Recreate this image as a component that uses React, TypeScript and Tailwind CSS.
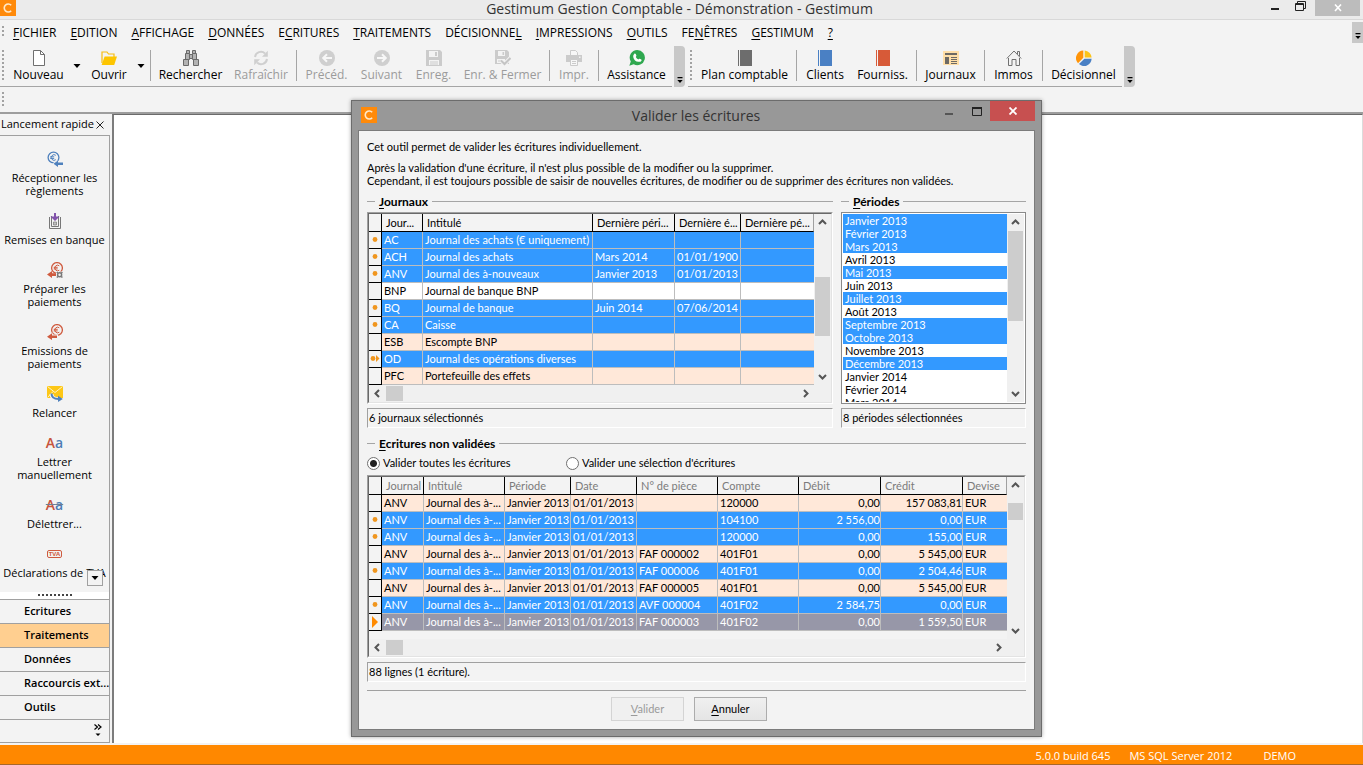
import type { ReactNode } from "react";

const SHELL = "font-['Open_Sans','Noto_Sans',sans-serif]";
const DIALOG = "font-[Lato,'Liberation_Sans',sans-serif]";

/* ---------- small helpers ---------- */

function Mnemonic({ text, at = 0 }: { text: string; at?: number }) {
  return (
    <>
      {text.slice(0, at)}
      <span className="underline underline-offset-2">{text[at]}</span>
      {text.slice(at + 1)}
    </>
  );
}

function Grip({ className }: { className: string }) {
  return (
    <span
      aria-hidden="true"
      className={`w-[2px] shrink-0 bg-[repeating-linear-gradient(to_bottom,#a2a2a2_0,#a2a2a2_2px,transparent_2px,transparent_4px)] ${className}`}
    />
  );
}

function Overflow({ className, label }: { className: string; label: string }) {
  return (
    <button type="button" aria-label={label} className={`flex shrink-0 items-end justify-center bg-[#c8c8c8] pb-[3px] ${className}`}>
      <svg width="6" height="7" viewBox="0 0 6 7" aria-hidden="true">
        <path d="M0.5 0h5v1.2h-5zM0.3 3h5.4L3 6z" fill="#000" />
      </svg>
    </button>
  );
}

function Logo({ className }: { className: string }) {
  return (
    <svg viewBox="0 0 16 16" className={className} aria-hidden="true">
      <rect width="16" height="16" fill="#ff8a0a" />
      <path d="M11.2 5.3A4 4 0 1 0 11.2 10.7" fill="none" stroke="#ffe9c8" strokeWidth="1.6" />
    </svg>
  );
}

function Icon({ children }: { children: ReactNode }) {
  return (
    <svg width="16" height="16" viewBox="0 0 16 16" aria-hidden="true" className="shrink-0">
      {children}
    </svg>
  );
}

/* ---------- toolbar icons ---------- */

const NewIcon = (
  <Icon>
    <path d="M2.5 0.5h7l4 4v11h-11z" fill="#fff" stroke="#6f6f6f" />
    <path d="M9.5 0.5v4h4" fill="none" stroke="#6f6f6f" />
  </Icon>
);
const OpenIcon = (
  <Icon>
    <path d="M1 13V2h5l1.5 2H13v3" fill="none" stroke="#f7bd12" strokeWidth="1.2" />
    <path d="M3.6 6.5H16L13.2 15H0.6z" fill="#fdc500" />
  </Icon>
);
const FindIcon = (
  <Icon>
    <g fill="#b3b3b3" stroke="#6a6a6a" strokeWidth="1">
      <path d="M3.5 0.5h3v3h-3zM9.5 0.5h3v3h-3z" />
      <path d="M2.5 3.5h4v6h-4zM9.5 3.5h4v6h-4z" />
      <path d="M0.5 9.5h5v6h-5zM10.5 9.5h5v6h-5z" />
      <path d="M6.5 4.5h3v4h-3z" />
    </g>
  </Icon>
);
const RefreshIcon = (
  <Icon>
    <path d="M2 7A6 6 0 0 1 12 3.4M14 9A6 6 0 0 1 4 12.6" fill="none" stroke="#cfcfcf" strokeWidth="2" />
    <path d="M14.8 0.8v6H9zM1.2 15.2v-6H7z" fill="#cfcfcf" />
  </Icon>
);
const PrevIcon = (
  <Icon>
    <circle cx="8" cy="8" r="8" fill="#cfcfcf" />
    <path d="M13 8H4.5M8 4.2L4.2 8L8 11.8" fill="none" stroke="#f7f7f7" strokeWidth="2" />
  </Icon>
);
const NextIcon = (
  <Icon>
    <circle cx="8" cy="8" r="8" fill="#cfcfcf" />
    <path d="M3 8h8.5M8 4.2L11.8 8L8 11.8" fill="none" stroke="#f7f7f7" strokeWidth="2" />
  </Icon>
);
const SaveIcon = (
  <Icon>
    <path d="M0 0h14l2 2v14H0z" fill="#cbcbcb" />
    <path d="M3 1h9v6H3zM3 10h10v5H3z" fill="#f3f3f3" />
    <path d="M9 2h2v4H9zM4 11.5h8v1H4zM4 13.5h8v1H4z" fill="#cbcbcb" />
  </Icon>
);
const SaveCloseIcon = (
  <Icon>
    <path d="M0 0h12l2 2v12H0z" fill="#cbcbcb" />
    <path d="M3 1h7v5H3zM2 9h8v4H2z" fill="#f3f3f3" />
    <path d="M7.5 2h1.6v3H7.5zM3 10.5h5v1H3z" fill="#cbcbcb" />
    <path d="M6 10.5l3.5 3.5L15.5 8" fill="none" stroke="#f3f3f3" strokeWidth="4" />
    <path d="M6 10.5l3.5 3.5L15.5 8" fill="none" stroke="#c4c4c4" strokeWidth="2" />
  </Icon>
);
const PrintIcon = (
  <Icon>
    <path d="M4.5 5V0.5h5l2 2V5" fill="#f7f7f7" stroke="#cbcbcb" />
    <path d="M0 5h16v7H0z" fill="#cbcbcb" />
    <path d="M4.5 9.5h7v6h-7z" fill="#f7f7f7" stroke="#cbcbcb" />
    <path d="M13 6.5h1.5V8H13z" fill="#f3f3f3" />
    <path d="M6 11.5h4M6 13.5h4" stroke="#cbcbcb" />
  </Icon>
);
const HelpIcon = (
  <Icon>
    <path d="M8.3 0a7.6 7.6 0 1 1-3.6 14.3L0.3 15.8l1.5-4.3A7.6 7.6 0 0 1 8.3 0z" fill="#2fa84f" />
    <path
      d="M5.2 4c.5-.6 1.2-.5 1.5.1l.7 1.5c.1.4-.1.8-.6 1.3.6 1.2 1.4 2 2.6 2.5.5-.7.9-.9 1.3-.7l1.5.8c.5.3.5.9.1 1.4-.7.9-1.7 1.2-2.9.8C6.7 11.7 4.8 9.6 4.3 7.2 4.1 5.9 4.3 4.9 5.2 4z"
      fill="#fff"
    />
  </Icon>
);
const bookIcon = (color: string) => (
  <Icon>
    <path d="M1 0h1v16H1zM3 0h12v16H3z" fill={color} />
  </Icon>
);
const JournalIcon = (
  <Icon>
    <rect y="1" width="16" height="14" fill="#ffdfa8" />
    <path d="M2 3h12v2H2zM2 7h4v7H2z" fill="#6d6a65" />
    <path d="M8 7.5h6M8 9.5h6M8 11.5h6M8 13.5h6" stroke="#6d6a65" />
  </Icon>
);
const HouseIcon = (
  <Icon>
    <path
      d="M0.8 8.5L8 1l7.2 7.5M2.5 8v7.5h3.5v-6h4v6h3.5v-7.5M11.5 4V1.5h2v4.5"
      fill="none"
      stroke="#707070"
      strokeWidth="1"
    />
  </Icon>
);
const PieIcon = (
  <Icon>
    <path d="M7.3 0.5v7.3L2 13.2A7.6 7.6 0 0 1 7.3 0.5z" fill="#ff9408" />
    <path d="M8.7 0.5A7.5 7.5 0 0 1 15.6 7.4H8.7z" fill="#fcc419" />
    <path d="M15.6 8.8A7.6 7.6 0 0 1 3 14.1L8.4 8.8z" fill="#4a80c4" />
  </Icon>
);

/* ---------- sidebar icons ---------- */

function EuroCoin({ color, cx, cy }: { color: string; cx: number; cy: number }) {
  return (
    <>
      <circle cx={cx} cy={cy} r="5.4" fill="none" stroke={color} strokeWidth="1.3" />
      <path
        d={`M${cx + 2.3} ${cy - 2.2}a2.8 2.8 0 1 0 0 4.4M${cx - 3.3} ${cy - 0.7}h4M${cx - 3.3} ${cy + 0.9}h4`}
        fill="none"
        stroke={color}
        strokeWidth="1"
      />
    </>
  );
}
const ReceiveIcon = (
  <Icon>
    <EuroCoin color="#4f81bd" cx={6.5} cy={6.5} />
    <path d="M16 10.5v4h-5.5V16.5L5.5 12.5l5-4v2z" fill="#f3f3f3" />
    <path d="M16 11.5v2.500h-5V16L6.500 12.700 11 9.500v2z" fill="#4f81bd" />
  </Icon>
);
const BankIcon = (
  <Icon>
    <path d="M2.5 4v11.5h11V4M4.5 3v10.5h7V3" fill="none" stroke="#777" />
    <path d="M6.5 9h3v3h-3z" fill="#c0c0c0" stroke="#777" strokeWidth="0.7" />
    <path d="M7 0h2v3.500h3.500L8 8 3.500 3.500H7z" fill="#8253ab" />
  </Icon>
);
const PrepareIcon = (
  <Icon>
    <EuroCoin color="#cf5b3f" cx={10} cy={6} />
    <path d="M0 12.5L5 9v2.3h4v2.6H5V16z" fill="#cf5b3f" />
    <rect x="9" y="9.5" width="7" height="6.5" fill="#f3f3f3" />
    <circle cx="12.6" cy="12.8" r="2" fill="none" stroke="#777" strokeWidth="1.5" />
    <path d="M9.8 10l1 1M15.4 10l-1 1M9.8 15.6l1-1M15.4 15.6l-1-1" stroke="#777" strokeWidth="1.4" />
  </Icon>
);
const EmitIcon = (
  <Icon>
    <EuroCoin color="#cf5b3f" cx={10} cy={6} />
    <path d="M0 12.5L5.5 8.2v2.3H11v4H5.5V17z" fill="#f3f3f3" />
    <path d="M0 12.7L5 9.2v2.3h5v2.5H5V16z" fill="#cf5b3f" />
  </Icon>
);
const RemindIcon = (
  <Icon>
    <rect width="16" height="12" fill="#fdc716" />
    <path d="M0.5 0.5L8 6.5l7.5-6M0.5 11.5L6 5.5" fill="none" stroke="#fff3c4" strokeWidth="1" />
    <path d="M4.5 8c0 4 3 5.2 7 5.2" fill="none" stroke="#f3f3f3" strokeWidth="4" />
    <path d="M4.5 7.5c0 4.5 3 5.5 7 5.5" fill="none" stroke="#4f81bd" strokeWidth="2" />
    <path d="M11 9.8l4.8 3.2L11 16z" fill="#4f81bd" />
  </Icon>
);
const LetterIcon = (
  <span aria-hidden="true" className="h-4 text-[14px] leading-4 font-semibold">
    <span className="text-[#c7543c]">A</span>
    <span className="text-[#4c7db5]">a</span>
  </span>
);
const UnletterIcon = (
  <span aria-hidden="true" className="h-4 text-[14px] leading-4 font-semibold text-[#6f7f94] line-through">
    <span className="text-[#c7543c]">A</span>
    <span className="text-[#4c7db5]">a</span>
  </span>
);
const VatIcon = (
  <span aria-hidden="true" className="flex h-4 items-center">
    <span className="rounded-xs border border-[#cf5b3f] px-px text-[6px] leading-[6px] font-bold text-[#cf5b3f]">TVA</span>
  </span>
);

/* ---------- application chrome ---------- */

const MENUS: [string, number][] = [
  ["FICHIER", 0],
  ["EDITION", 0],
  ["AFFICHAGE", 0],
  ["DONNÉES", 0],
  ["ECRITURES", 1],
  ["TRAITEMENTS", 0],
  ["DÉCISIONNEL", 10],
  ["IMPRESSIONS", 0],
  ["OUTILS", 0],
  ["FENÊTRES", 2],
  ["GESTIMUM", 0],
  ["?", 0],
];

function Tool({ icon, label, width, disabled }: { icon: ReactNode; label: string; width: string; disabled?: boolean }) {
  return (
    <button
      type="button"
      disabled={disabled}
      className={`flex shrink-0 flex-col items-center gap-px whitespace-nowrap disabled:text-[#9b9b9b] ${width}`}
    >
      {icon}
      <span className="leading-4">{label}</span>
    </button>
  );
}

function ToolArrow({ label }: { label: string }) {
  return (
    <button type="button" aria-label={label} className="flex h-8 w-[14px] shrink-0 items-center justify-center">
      <svg width="8" height="4" viewBox="0 0 8 4" aria-hidden="true">
        <path d="M0.5 0h7L4 4z" fill="#000" />
      </svg>
    </button>
  );
}

const Sep = () => <span className="mx-[2px] h-[31px] w-px shrink-0 bg-[#a5a5a5]" />;

function TitleBar() {
  return (
    <header className="flex h-5 shrink-0 items-start border-b border-[#d8d8d8] bg-[#ebebeb]">
      <Logo className="size-4" />
      <h1 className="flex-1 pl-[72px] text-center text-[14px] leading-[18px] text-[#333]">
        Gestimum Gestion Comptable - Démonstration - Gestimum
      </h1>
      <div className="flex pr-[3px]">
        <button type="button" aria-label="Réduire" className="flex h-3 w-6 items-center justify-start">
          <svg width="8" height="12" viewBox="0 0 8 12" aria-hidden="true">
            <path d="M0 8h8v2H0z" fill="#222" />
          </svg>
        </button>
        <button type="button" aria-label="Restaurer" className="h-3 w-5">
          <svg width="11" height="12" viewBox="0 0 11 12" aria-hidden="true">
            <path d="M0.5 3.5h8v7h-8zM0 4.5h9M2.5 3V1.5h8v7H9" fill="none" stroke="#222" />
          </svg>
        </button>
        <button type="button" aria-label="Fermer" className="flex h-4 w-[45px] items-center justify-center bg-[#bcbcbc]">
          <svg width="8" height="8" viewBox="0 0 8 8" aria-hidden="true">
            <path d="M1 0.5l6 6.5M7 0.5L1 7" stroke="#fff" strokeWidth="1.6" />
          </svg>
        </button>
      </div>
    </header>
  );
}

function MenuBar() {
  return (
    <nav className="flex h-[26px] shrink-0 items-start">
      <Grip className="mt-[6px] ml-[2px] h-[10px]" />
      <div className="flex flex-1 gap-[14px] pt-[5px] pl-[9px]">
        {MENUS.map(([text, at]) => (
          <button key={text} type="button" className="leading-4 whitespace-nowrap">
            <Mnemonic text={text} at={at} />
          </button>
        ))}
      </div>
      <Overflow label="Options du menu" className="mt-[2px] h-[21px] w-[11px]" />
    </nav>
  );
}

function ToolBar() {
  return (
    <div className="flex h-[42px] shrink-0 items-start">
      <div className="flex h-[41px] shrink-0 items-start border-b border-[#a5a5a5] pt-1">
        <Grip className="mr-[3px] ml-[2px] h-[30px]" />
        <Tool icon={NewIcon} label="Nouveau" width="w-[63px]" />
        <ToolArrow label="Choix de création" />
        <Tool icon={OpenIcon} label="Ouvrir" width="w-[50px]" />
        <ToolArrow label="Choix d'ouverture" />
        <Sep />
        <Tool icon={FindIcon} label="Rechercher" width="w-[75px]" />
        <Tool icon={RefreshIcon} label="Rafraîchir" width="w-[66px]" disabled />
        <Sep />
        <Tool icon={PrevIcon} label="Précéd." width="w-[55px]" disabled />
        <Tool icon={NextIcon} label="Suivant" width="w-[55px]" disabled />
        <Tool icon={SaveIcon} label="Enreg." width="w-[49px]" disabled />
        <Tool icon={SaveCloseIcon} label="Enr. & Fermer" width="w-[89px]" disabled />
        <Sep />
        <Tool icon={PrintIcon} label="Impr." width="w-[44px]" disabled />
        <Sep />
        <Tool icon={HelpIcon} label="Assistance" width="w-[71px]" />
      </div>
      <Overflow label="Options de la barre standard" className="ml-[2px] h-[41px] w-[11px] rounded-r-sm" />
      <div className="ml-[3px] flex h-[41px] shrink-0 items-start border-b border-[#a5a5a5] pt-1">
        <Grip className="mr-[3px] ml-[2px] h-[30px]" />
        <Tool icon={bookIcon("#6d6d6d")} label="Plan comptable" width="w-[99px]" />
        <Sep />
        <Tool icon={bookIcon("#4a80c4")} label="Clients" width="w-[52px]" />
        <Tool icon={bookIcon("#d75a38")} label="Fourniss." width="w-[63px]" />
        <Sep />
        <Tool icon={JournalIcon} label="Journaux" width="w-[63px]" />
        <Sep />
        <Tool icon={HouseIcon} label="Immos" width="w-[53px]" />
        <Sep />
        <Tool icon={PieIcon} label="Décisionnel" width="w-[77px]" />
      </div>
      <Overflow label="Options de la barre comptable" className="ml-[2px] h-[41px] w-[11px] rounded-r-sm" />
    </div>
  );
}

const SHORTCUTS: { icon: ReactNode; label: string }[] = [
  { icon: ReceiveIcon, label: "Réceptionner les règlements" },
  { icon: BankIcon, label: "Remises en banque" },
  { icon: PrepareIcon, label: "Préparer les paiements" },
  { icon: EmitIcon, label: "Emissions de paiements" },
  { icon: RemindIcon, label: "Relancer" },
  { icon: LetterIcon, label: "Lettrer manuellement" },
  { icon: UnletterIcon, label: "Délettrer..." },
  { icon: VatIcon, label: "Déclarations de TVA" },
];

const CATEGORIES = ["Ecritures", "Traitements", "Données", "Raccourcis ext...", "Outils"];

function Sidebar() {
  return (
    <aside className="flex w-[112px] shrink-0 flex-col text-[11px]">
      <div className="flex h-[21px] shrink-0 items-center justify-between pr-2 pl-px">
        <h2>Lancement rapide</h2>
        <button type="button" aria-label="Fermer le panneau">
          <svg width="8" height="8" viewBox="0 0 8 8" aria-hidden="true">
            <path d="M0.5 0.5l7 7M7.5 0.5l-7 7" stroke="#222" />
          </svg>
        </button>
      </div>
      <div className="mr-[2px] mb-[2px] flex min-h-0 flex-1 flex-col border-t border-r border-b border-[#a0a0a0]">
        <div className="relative flex min-h-0 flex-1 flex-col gap-4 overflow-hidden pt-[15px]">
          {SHORTCUTS.map(({ icon, label }) => (
            <button key={label} type="button" className="flex shrink-0 flex-col items-center gap-1">
              {icon}
              <span className={label.length > 19 ? "w-[90px] leading-[13px]" : "leading-[13px] whitespace-nowrap"}>{label}</span>
            </button>
          ))}
          <button
            type="button"
            aria-label="Faire défiler"
            className="absolute right-[6px] bottom-[6px] flex size-4 items-center justify-center border border-[#a0a0a0] bg-[#f3f3f3]"
          >
            <svg width="8" height="4" viewBox="0 0 8 4" aria-hidden="true">
              <path d="M0.5 0h7L4 4z" fill="#000" />
            </svg>
          </button>
        </div>
        <div className="flex h-[7px] shrink-0 justify-center bg-white pt-[2px]">
          <span className="h-[2px] w-[34px] bg-[repeating-linear-gradient(to_right,#444_0,#444_2px,transparent_2px,transparent_4px)]" />
        </div>
        {CATEGORIES.map((name) => (
          <button
            key={name}
            type="button"
            className={`h-6 shrink-0 overflow-hidden border-t border-[#a0a0a0] pl-6 text-left font-semibold whitespace-nowrap ${
              name === "Traitements" ? "bg-[#ffcf90]" : ""
            }`}
          >
            {name}
          </button>
        ))}
        <div className="flex h-[23px] shrink-0 justify-end border-t border-[#a0a0a0] pt-1 pr-[7px]">
          <button type="button" aria-label="Autres rubriques" className="self-start">
            <svg width="8" height="13" viewBox="0 0 8 13" aria-hidden="true">
              <path d="M0.5 0.5l3 2.5-3 2.5M4 0.5l3 2.5-3 2.5" fill="none" stroke="#000" strokeWidth="1.2" />
              <path d="M1.5 9.5h5L4 12z" fill="#000" />
            </svg>
          </button>
        </div>
      </div>
    </aside>
  );
}

/* ---------- dialog ---------- */

const CHEVRONS = {
  up: "M1 6L4.5 2.5L8 6",
  down: "M1 3L4.5 6.5L8 3",
  left: "M6 1L2.5 4.5L6 8",
  right: "M3 1L6.5 4.5L3 8",
};

function ScrollArrow({ dir, label }: { dir: keyof typeof CHEVRONS; label: string }) {
  return (
    <button type="button" aria-label={label} className="flex size-[17px] shrink-0 items-center justify-center">
      <svg width="9" height="9" viewBox="0 0 9 9" aria-hidden="true">
        <path d={CHEVRONS[dir]} fill="none" stroke="#555" strokeWidth="2" />
      </svg>
    </button>
  );
}

function VScroll({ thumb }: { thumb: string }) {
  return (
    <div className="flex w-[17px] shrink-0 flex-col bg-[#f0f0f0]">
      <ScrollArrow dir="up" label="Défiler vers le haut" />
      <div className="flex-1 px-px">
        <div className={`bg-[#cdcdcd] ${thumb}`} />
      </div>
      <ScrollArrow dir="down" label="Défiler vers le bas" />
    </div>
  );
}

function HScroll() {
  return (
    <div className="flex h-[17px] shrink-0 bg-[#f0f0f0] pr-[17px]">
      <ScrollArrow dir="left" label="Défiler vers la gauche" />
      <div className="flex-1 py-px">
        <div className="h-[15px] w-[17px] bg-[#cdcdcd]" />
      </div>
      <ScrollArrow dir="right" label="Défiler vers la droite" />
    </div>
  );
}

type Mark = "none" | "dot" | "dotArrow" | "arrow";
type Tone = "sel" | "alt" | "plain" | "current";
type Row = { mark: Mark; tone: Tone; cells: string[] };

const TONES: Record<Tone, string> = {
  sel: "bg-[#3399ff] text-white",
  alt: "bg-[#ffe8d9] text-black",
  plain: "bg-white text-black",
  current: "bg-[#9797a8] text-white",
};

function RowMark({ mark }: { mark: Mark }) {
  return (
    <svg width="12" height="16" viewBox="0 0 12 16" className="block" aria-hidden="true">
      {mark === "dot" && <circle cx="6" cy="7.5" r="2.4" fill="#f0961e" />}
      {mark === "dotArrow" && (
        <>
          <circle cx="4" cy="7.5" r="2.4" fill="#f0961e" />
          <path d="M7 4l3.5 3.5L7 11z" fill="#f0961e" />
        </>
      )}
      {mark === "arrow" && <path d="M3 2l6 6-6 6z" fill="#ff8a00" />}
    </svg>
  );
}

function DataGrid({
  label,
  heads,
  widths,
  rows,
  headTone,
  numeric = [],
}: {
  label: string;
  heads: string[];
  widths: string[];
  rows: Row[];
  headTone: string;
  numeric?: number[];
}) {
  return (
    <table aria-label={label} className="w-full table-fixed border-separate border-spacing-0 leading-4 whitespace-nowrap">
      <colgroup>
        <col className="w-[13px]" />
        {widths.map((w, i) => (
          <col key={i} className={w} />
        ))}
      </colgroup>
      <thead>
        <tr className={`h-[18px] ${headTone}`}>
          <th className="border-r border-b border-black bg-[#f3f3f3] p-0" aria-label="État" />
          {heads.map((h, i) => (
            <th
              key={i}
              className="overflow-hidden border-r border-b border-black bg-[#f3f3f3] py-0 pr-0 pl-1 text-left font-normal last:border-r-[#a0a0a0]"
            >
              {h}
            </th>
          ))}
        </tr>
      </thead>
      <tbody>
        {rows.map((row, r) => (
          <tr key={r} className={`h-[17px] ${TONES[row.tone]}`}>
            <td className="border-r border-b border-black bg-[#f3f3f3] p-0">
              <RowMark mark={row.mark} />
            </td>
            {row.cells.map((c, i) => (
              <td
                key={i}
                className={`overflow-hidden border-r border-b border-[#bdbdbd] py-0 last:border-r-0 ${
                  numeric.includes(i) ? "pr-0 text-right" : "pl-[2px]"
                }`}
              >
                {c}
              </td>
            ))}
          </tr>
        ))}
      </tbody>
    </table>
  );
}

const JOURNAL_ROWS: Row[] = [
  { mark: "dot", tone: "sel", cells: ["AC", "Journal des achats (€ uniquement)", "", "", ""] },
  { mark: "dot", tone: "sel", cells: ["ACH", "Journal des achats", "Mars 2014", "01/01/1900", ""] },
  { mark: "dot", tone: "sel", cells: ["ANV", "Journal des à-nouveaux", "Janvier 2013", "01/01/2013", ""] },
  { mark: "none", tone: "plain", cells: ["BNP", "Journal de banque BNP", "", "", ""] },
  { mark: "dot", tone: "sel", cells: ["BQ", "Journal de banque", "Juin 2014", "07/06/2014", ""] },
  { mark: "dot", tone: "sel", cells: ["CA", "Caisse", "", "", ""] },
  { mark: "none", tone: "alt", cells: ["ESB", "Escompte BNP", "", "", ""] },
  { mark: "dotArrow", tone: "sel", cells: ["OD", "Journal des opérations diverses", "", "", ""] },
  { mark: "none", tone: "alt", cells: ["PFC", "Portefeuille des effets", "", "", ""] },
];

const entry = (mark: Mark, tone: Tone, piece: string, account: string, debit: string, credit: string): Row => ({
  mark,
  tone,
  cells: ["ANV", "Journal des à-...", "Janvier 2013", "01/01/2013", piece, account, debit, credit, "EUR"],
});

const ENTRY_ROWS: Row[] = [
  entry("none", "alt", "", "120000", "0,00", "157 083,81"),
  entry("dot", "sel", "", "104100", "2 556,00", "0,00"),
  entry("dot", "sel", "", "120000", "0,00", "155,00"),
  entry("none", "alt", "FAF 000002", "401F01", "0,00", "5 545,00"),
  entry("dot", "sel", "FAF 000006", "401F01", "0,00", "2 504,46"),
  entry("none", "alt", "FAF 000005", "401F01", "0,00", "5 545,00"),
  entry("dot", "sel", "AVF 000004", "401F02", "2 584,75", "0,00"),
  entry("arrow", "current", "FAF 000003", "401F02", "0,00", "1 559,50"),
];

const PERIODS = [
  "Janvier 2013",
  "Février 2013",
  "Mars 2013",
  "Avril 2013",
  "Mai 2013",
  "Juin 2013",
  "Juillet 2013",
  "Août 2013",
  "Septembre 2013",
  "Octobre 2013",
  "Novembre 2013",
  "Décembre 2013",
  "Janvier 2014",
  "Février 2014",
  "Mars 2014",
];
const CHOSEN = [
  "Janvier 2013",
  "Février 2013",
  "Mars 2013",
  "Mai 2013",
  "Juillet 2013",
  "Septembre 2013",
  "Octobre 2013",
  "Décembre 2013",
];

function SectionTitle({ text }: { text: string }) {
  return (
    <div className="flex h-[13px] items-center gap-1">
      <span className="h-px w-2 bg-[#a5a5a5]" />
      <h3 className="text-[12px] leading-[13px] font-bold">
        <Mnemonic text={text} />
      </h3>
      <span className="h-px flex-1 bg-[#a5a5a5]" />
    </div>
  );
}

function Info({ children }: { children: ReactNode }) {
  return (
    <p className="h-5 border border-t-[#a0a0a0] border-r-white border-b-white border-l-[#a0a0a0] px-px leading-[18px]">
      {children}
    </p>
  );
}

const SUNKEN = "border border-t-[#a0a0a0] border-l-[#a0a0a0] border-r-white border-b-white";
const SUNKEN_INNER = "border border-t-[#696969] border-l-[#696969] border-r-[#e3e3e3] border-b-[#e3e3e3]";

function ValidateDialog() {
  return (
    <section
      role="dialog"
      aria-labelledby="dialog-title"
      className="absolute top-[100px] left-[351px] flex w-[691px] flex-col border border-[#6c6c6c] bg-[#989898] px-[6px] pb-[6px] shadow-[0_0_4px_rgba(0,0,0,0.35)]"
    >
      <div className="flex h-[29px] items-start">
        <Logo className="mt-[6px] ml-[3px] size-4" />
        <h2 id="dialog-title" className={`flex-1 pl-20 text-center text-[14px] leading-[29px] text-[#333] ${SHELL}`}>
          Valider les écritures
        </h2>
        <button type="button" aria-label="Réduire la fenêtre" className="flex h-5 w-7 items-center justify-center">
          <svg width="8" height="8" viewBox="0 0 8 8" aria-hidden="true">
            <path d="M0 6h8v2H0z" fill="#555" />
          </svg>
        </button>
        <button type="button" aria-label="Agrandir la fenêtre" className="flex h-5 w-[27px] items-center justify-center">
          <svg width="10" height="9" viewBox="0 0 10 9" aria-hidden="true">
            <path d="M0.5 1v7.5h9V1M0 1h10" fill="none" stroke="#222" />
            <path d="M0 0h10v2H0z" fill="#222" />
          </svg>
        </button>
        <button type="button" aria-label="Fermer la fenêtre" className="flex h-5 w-[45px] items-center justify-center bg-[#c75050]">
          <svg width="8" height="8" viewBox="0 0 8 8" aria-hidden="true">
            <path d="M0.5 0.5l7 7M7.5 0.5l-7 7" stroke="#fff" strokeWidth="1.8" />
          </svg>
        </button>
      </div>

      <div className={`flex flex-col border border-[#7b7b7b] bg-[#f3f3f3] px-2 pt-[9px] pb-2 text-[11px] ${DIALOG}`}>
        <p className="leading-[13px]">Cet outil permet de valider les écritures individuellement.</p>
        <p className="mt-2 leading-[13px]">
          Après la validation d'une écriture, il n'est plus possible de la modifier ou la supprimer.
          <br />
          Cependant, il est toujours possible de saisir de nouvelles écritures, de modifier ou de supprimer des écritures non
          validées.
        </p>

        <div className="mt-2 flex gap-2">
          <div className="flex w-[466px] flex-col gap-1">
            <SectionTitle text="Journaux" />
            <div className={SUNKEN}>
              <div className={SUNKEN_INNER}>
                <div className="flex">
                  <div className="min-w-0 flex-1">
                    <DataGrid
                      label="Journaux"
                      heads={["Jour...", "Intitulé", "Dernière péri...", "Dernière é...", "Dernière pé..."]}
                      widths={["w-[41px]", "w-[170px]", "w-[82px]", "w-[66px]", "w-[73px]"]}
                      rows={JOURNAL_ROWS}
                      headTone="text-black"
                    />
                  </div>
                  <VScroll thumb="mt-[46px] h-[59px]" />
                </div>
                <HScroll />
              </div>
            </div>
            <Info>6 journaux sélectionnés</Info>
          </div>

          <div className="flex min-w-0 flex-1 flex-col gap-1">
            <SectionTitle text="Périodes" />
            <div className="flex h-[192px] border border-[#8a8a8a] bg-white p-px">
              <select
                multiple
                aria-label="Périodes"
                defaultValue={CHOSEN}
                className="h-[188px] min-w-0 flex-1 appearance-none overflow-hidden bg-white p-0"
              >
                {PERIODS.map((p) => (
                  <option
                    key={p}
                    value={p}
                    className="h-[13px] min-h-0 px-[2px] py-0 leading-[13px] text-black checked:bg-[linear-gradient(#3399ff,#3399ff)] checked:[-webkit-text-fill-color:#fff]"
                  >
                    {p}
                  </option>
                ))}
              </select>
              <VScroll thumb="h-[90px]" />
            </div>
            <Info>8 périodes sélectionnées</Info>
          </div>
        </div>

        <div className="mt-[9px]">
          <SectionTitle text="Ecritures non validées" />
        </div>
        <div className="mt-[5px] flex h-4 items-center">
          {["Valider toutes les écritures", "Valider une sélection d'écritures"].map((text, i) => (
            <label key={text} className={`flex items-center gap-[3px] ${i === 0 ? "w-[199px]" : ""}`}>
              <input
                type="radio"
                name="scope"
                defaultChecked={i === 0}
                className="size-[13px] appearance-none rounded-full border border-[#707070] bg-white checked:bg-[radial-gradient(circle,#222_0,#222_3px,#fff_4px)]"
              />
              {text}
            </label>
          ))}
        </div>

        <div className={`mt-1 ${SUNKEN}`}>
          <div className={SUNKEN_INNER}>
            <div className="flex">
              <div className="min-w-0 flex-1 pb-2">
                <DataGrid
                  label="Ecritures non validées"
                  heads={["Journal", "Intitulé", "Période", "Date", "N° de pièce", "Compte", "Débit", "Crédit", "Devise"]}
                  widths={[
                    "w-[42px]",
                    "w-[81px]",
                    "w-[66px]",
                    "w-[66px]",
                    "w-[81px]",
                    "w-[81px]",
                    "w-[82px]",
                    "w-[82px]",
                    "w-[44px]",
                  ]}
                  rows={ENTRY_ROWS}
                  headTone="text-[#7b7b7b]"
                  numeric={[6, 7]}
                />
              </div>
              <VScroll thumb="mt-[9px] h-[17px]" />
            </div>
            <HScroll />
          </div>
        </div>
        <div className="mt-1">
          <Info>88 lignes (1 écriture).</Info>
        </div>

        <div className="mt-2 flex justify-center gap-[10px] border-t border-[#a0a0a0] pt-[6px] pr-[15px]">
          <button
            type="button"
            disabled
            className="h-6 w-[73px] border border-[#d4d4d4] bg-[#f0f0f0] text-[#9a9a9a]"
          >
            <Mnemonic text="Valider" />
          </button>
          <button
            type="button"
            className="h-6 w-[73px] border border-[#acacac] bg-linear-to-b from-[#f0f0f0] to-[#e5e5e5] text-black"
          >
            <Mnemonic text="Annuler" />
          </button>
        </div>
      </div>
    </section>
  );
}

export default function App() {
  return (
    <div className={`relative flex h-screen min-h-[765px] flex-col bg-[#f3f3f3] text-[12px] text-black ${SHELL}`}>
      <TitleBar />
      <MenuBar />
      <ToolBar />
      <div className="flex h-6 shrink-0 items-start pt-1">
        <Grip className="ml-[2px] h-[14px]" />
      </div>
      <div className="flex min-h-0 flex-1 border-t-2 border-[#9d9d9d]">
        <Sidebar />
        <main className="mb-[2px] min-w-0 flex-1 border-t border-r border-l-2 border-t-[#6b6b6b] border-r-[#dcdcdc] border-l-[#7c7c7c] bg-white" />
      </div>
      <footer className="flex h-5 shrink-0 items-center justify-end border-b border-[#a8682a] bg-[#ff8800] pt-[3px] pr-[67px] text-[11px] text-white">
        <span className="w-[94px]">5.0.0 build 645</span>
        <span className="w-[134px]">MS SQL Server 2012</span>
        <span>DEMO</span>
      </footer>
      <ValidateDialog />
    </div>
  );
}
